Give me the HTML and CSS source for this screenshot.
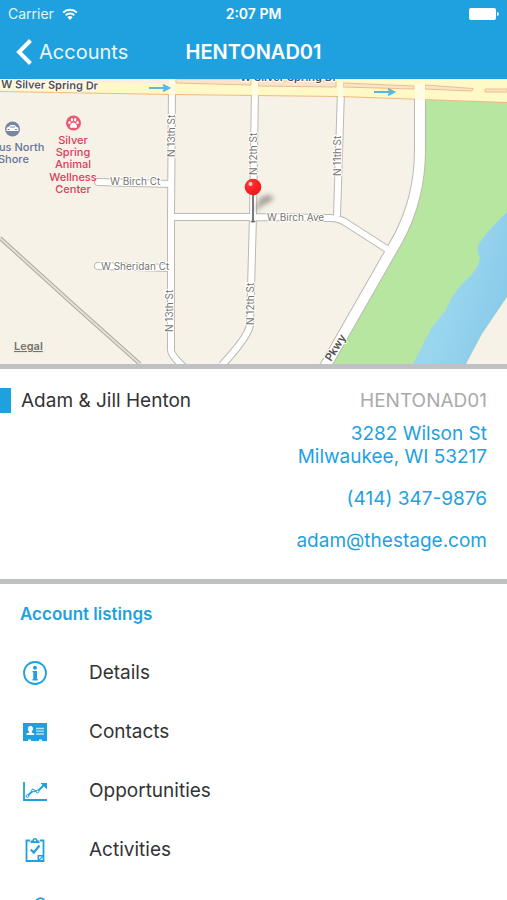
FILE: index.html
```html
<!DOCTYPE html>
<html lang="en">
<head>
<meta charset="utf-8">
<meta name="viewport" content="width=device-width, initial-scale=1">
<title>HENTONAD01</title>
<link rel="stylesheet" href="styles.css">
</head>
<body>
<div class="app">
  <header class="top">
    <div class="status">
      <span class="carrier">Carrier
        <svg class="wifi" viewBox="0 0 16 12" width="16" height="12" aria-hidden="true">
          <g fill="none" stroke="#fff" stroke-width="2">
            <path d="M1.2 4.6a9.8 9.8 0 0 1 13.6 0"/>
            <path d="M3.7 7.3a6.2 6.2 0 0 1 8.6 0"/>
          </g>
          <path d="M8 12 5.4 9.2a3.8 3.8 0 0 1 5.2 0z" fill="#fff"/>
        </svg>
      </span>
      <span class="time">2:07 PM</span>
      <svg class="battery" viewBox="0 0 30 12" width="30" height="12" aria-hidden="true">
        <rect width="27" height="12" rx="2" fill="#fff"/>
        <path d="M28 4q2 .3 2 2t-2 2z" fill="#fff"/>
      </svg>
    </div>
    <nav class="nav">
      <a class="back" href="#accounts">
        <svg viewBox="0 0 16 26" width="16" height="26" aria-hidden="true"><path d="M14.500 1.500 3 13l11.500 11.500" fill="none" stroke="#fff" stroke-width="4"/></svg>
        Accounts
      </a>
      <h1 class="title">HENTONAD01</h1>
    </nav>
  </header>

  <main class="content">
    <svg class="map" viewBox="0 79 507 285" preserveAspectRatio="xMidYMid slice" role="img" aria-label="Map">
      <defs>
        <radialGradient id="ball" cx=".35" cy=".3" r=".75"><stop offset="0" stop-color="#ff3a3c"/><stop offset=".6" stop-color="#fb1c22"/><stop offset="1" stop-color="#f0161c"/></radialGradient>
        <linearGradient id="water" x1="0" y1="0" x2="1" y2=".5"><stop offset="0" stop-color="#98d2e9"/><stop offset=".5" stop-color="#9ad6ee"/><stop offset="1" stop-color="#8bcbea"/></linearGradient>
        <filter id="soft" x="-50%" y="-50%" width="200%" height="200%"><feGaussianBlur stdDeviation="2.500"/></filter>
      </defs>
      <rect y="79" width="507" height="285" fill="#f7f2e8"/>
      <path d="M420 95H507V364H325L395 250Q421 200 421 150z" fill="#b6e6a0"/>
      <path d="M507 212Q490 228 480 242q-5 8 0 15-1 13-16 25Q452 294 446 310L432 327 413 364H466L482 334 507 297z" fill="url(#water)"/>
      <path d="M466 364 482 334 507 297V364z" fill="#f7f2e8"/>

      <path d="M0 238 75 306 140 364" fill="none" stroke="#aaa9a3" stroke-width="4"/>
      <path d="M0 238 75 306 140 364" fill="none" stroke="#e5e1d7" stroke-width="2"/>

      <g fill="none" stroke="#bdb9b1" stroke-linejoin="round">
        <path stroke-width="8" d="M172 86 171 216V350q0 6 16 20M255 88 253 216 250 325q-2 12-28 40M341 90 337 216M172 217 253 217 330 218Q340 218 348 224L390 251"/>
        <path stroke-width="8" stroke-linecap="round" d="M98 182 171 184M98 266 171 268"/>
        <path stroke-width="12" d="M420 90V150Q420 198 398 239L322 372"/>
      </g>
      <g fill="none" stroke="#fff" stroke-linejoin="round">
        <path stroke-width="6" d="M172 86 171 216V350q0 6 16 20M255 88 253 216 250 325q-2 12-28 40M341 90 337 216M172 217 253 217 330 218Q340 218 348 224L390 251"/>
        <path stroke-width="6" stroke-linecap="round" d="M98 182 171 184M98 266 171 268"/>
        <path stroke-width="10" d="M420 90V150Q420 198 398 239L322 372"/>
      </g>

      <path d="M0 79H507V103L340 97 172 95 0 92z" fill="#efb97f"/>
      <path d="M0 79H507V102L340 96 172 94 0 91z" fill="#fff9c8"/>
      <path d="M0 79H170V84L60 82 0 81z" fill="#fbeedd"/>
      <g fill="#f9e4cb" stroke="#edbd8e" stroke-width="1">
        <path d="M176 79H251V85L176 83zM258 81H336V87L258 86zM343 83 414 86V89L343 87zM425 85 473 88.500 472 91 425 89zM485 89H507V92H485z"/>
      </g>
      <g fill="#fffce4">
        <path d="M169 80h6v16h-6zM252 80h6v17h-6zM338 82h5v16h-5zM415 84h10v16h-10z"/>
      </g>
      <g fill="none" stroke="#5db4dd" stroke-width="2">
        <path d="M149 88H168M163 85l6 3-6 3M374 92H393M388 89l6 3-6 3"/>
      </g>

      <g class="street">
        <text x="110" y="185">W Birch Ct</text>
        <text x="101" y="270">W Sheridan Ct</text>
        <text x="267" y="221">W Birch Ave</text>
        <text transform="translate(175 157) rotate(-90)">N 13th St</text>
        <text transform="translate(257 175) rotate(-90)">N 12th St</text>
        <text transform="translate(341 176) rotate(-90)">N 11th St</text>
        <text transform="translate(173 332) rotate(-90)">N 13th St</text>
        <text transform="translate(254 325) rotate(-90)">N 12th St</text>
      </g>
      <g class="avenue">
        <text transform="translate(1 88) rotate(1)">W Silver Spring Dr</text>
        <text x="240" y="81">W Silver Spring Dr</text>
        <text transform="translate(331 362) rotate(-58)">Pkwy</text>
      </g>

      <circle cx="12.500" cy="129" r="7.500" fill="#7985a4"/>
      <path d="M6.500 129q0-2 2-2l2-2h4l2 2q2 0 2 2v2h-12z" fill="#fff"/>
      <path d="M10 127h5M7.500 129.500h2M15 129.500h2" stroke="#7985a4" stroke-width="1"/>
      <g class="poi poi-shop">
        <text x="-1" y="151">us North</text>
        <text x="-2" y="163">Shore</text>
      </g>
      <circle cx="73.500" cy="123" r="7.500" fill="#e95971"/>
      <g fill="#fff">
        <path d="M73.500 122.500c2 0 4 3 3.500 4.500s-2 .7-3.500.7-3 .8-3.500-.7 1.500-4.500 3.500-4.500z"/>
        <ellipse cx="69.500" cy="122.500" rx="1.200" ry="1.600"/><ellipse cx="72" cy="119.800" rx="1.200" ry="1.700"/>
        <ellipse cx="75.200" cy="119.800" rx="1.200" ry="1.700"/><ellipse cx="77.600" cy="122.500" rx="1.200" ry="1.600"/>
      </g>
      <g class="poi poi-pet">
        <text x="73" y="144">Silver</text>
        <text x="73" y="156">Spring</text>
        <text x="73" y="168">Animal</text>
        <text x="73" y="181">Wellness</text>
        <text x="73" y="193">Center</text>
      </g>

      <path d="M254 213 260 198q6-5 13-2 1 6-10 9z" fill="#55524c" opacity=".5" filter="url(#soft)"/>
      <ellipse cx="253" cy="221.500" rx="2.500" ry="1" fill="#6c6c6c"/>
      <path d="M253 194V221" stroke="#777" stroke-width="2"/>
      <circle cx="253" cy="187" r="8.300" fill="url(#ball)"/>
      <circle cx="250.500" cy="184" r="2" fill="#ffc9c9"/>

      <a href="#legal"><text class="legal" x="14" y="350">Legal</text></a>
    </svg>

    <section class="card">
      <div class="summary">
        <h2 class="name">Adam &amp; Jill Henton</h2>
        <span class="code">HENTONAD01</span>
      </div>
      <address class="contact">
        <a href="#map">3282 Wilson St<br>Milwaukee, WI 53217</a>
        <a href="tel:4143479876">(414) 347-9876</a>
        <a href="mailto:adam@thestage.com">adam@thestage.com</a>
      </address>
    </section>

    <section class="listings">
      <h2 class="heading">Account listings</h2>
      <ul class="list">
        <li><a class="row" href="#details">
          <svg class="icon" viewBox="0 0 24 24" aria-hidden="true"><circle cx="12" cy="12" r="11" fill="none" stroke="#1fa1df" stroke-width="1.800"/><circle cx="12" cy="6.800" r="2"/><path d="M9.500 10h4.500v8h.8v1.500H9.500V18h.8v-6.700h-.8z"/></svg>
          Details</a></li>
        <li><a class="row" href="#contacts">
          <svg class="icon" viewBox="0 0 24 24" aria-hidden="true"><path d="M0 3h24v18h-5v-1.500h-3V21H8v-1.500H5V21H0z"/><path d="M7.500 6c3.400 0 2.800 4.600 1.200 5.600v1.200l2.500.8V15H3.500v-1.400l2.500-.8v-1.200C4.600 10.600 4 6 7.500 6z" fill="#fff"/><path d="M13 8.500h8M13 11.200h8M13 14h8" stroke="#b9e1f5" stroke-width="1.300"/></svg>
          Contacts</a></li>
        <li><a class="row" href="#opportunities">
          <svg class="icon" viewBox="0 0 24 24" aria-hidden="true"><path d="M1 3v18h23" fill="none" stroke="#1fa1df" stroke-width="1.800"/><path d="M4.500 17 10 11.500l4.500 1L22 5" fill="none" stroke="#1fa1df" stroke-width="2"/><path d="M17.500 4H24v6.500z"/><g fill="#fff" stroke="#1fa1df"><circle cx="4.500" cy="17" r="1.400"/><circle cx="10" cy="11.500" r="1.400"/><circle cx="14.500" cy="12.500" r="1.400"/></g></svg>
          Opportunities</a></li>
        <li><a class="row" href="#activities">
          <svg class="icon" viewBox="0 0 24 24" aria-hidden="true"><path d="M7 2.500H3.500v20.500H20.500V2.500H17" fill="none" stroke="#1fa1df" stroke-width="1.800"/><path d="M7.500 5V2.500H9.500a2.500 2.500 0 0 1 5 0h2V5z"/><circle cx="12" cy="2.400" r=".9" fill="#fff"/><path d="m7.800 11.500 3 3 5.700-7" fill="none" stroke="#1fa1df" stroke-width="2.200"/><path d="M14.500 23v-6H21v1l-5 5z"/><path d="M16 18.500h3L16 21z" fill="#fff"/></svg>
          Activities</a></li>
        <li><a class="row" href="#attachments">
          <svg class="icon" viewBox="0 0 24 24" aria-hidden="true"><path d="M18 11 9 20a4 4 0 0 1-6-6L14.500 2.500a4.200 4.200 0 0 1 6 6L11 18" fill="none" stroke="#1fa1df" stroke-width="1.800"/></svg>
          Attachments</a></li>
      </ul>
    </section>
  </main>
</div>
</body>
</html>
```
FILE: styles.css
```css
* {
  box-sizing: border-box;
}

body,
h1,
h2,
ul {
  margin: 0;
  padding: 0;
}

body {
  font-family: Inter, "Liberation Sans", sans-serif;
  font-size: 19px;
  color: #333;
  background: #fff;
}

a {
  color: #1fa1df;
  text-decoration: none;
}

.app {
  display: flex;
  flex-direction: column;
  height: 100vh;
  overflow: hidden;
}

.top {
  flex: none;
  color: #fff;
  background: #1fa1df;
}

.status,
.nav {
  display: grid;
  grid-template-columns: 1fr auto 1fr;
  align-items: center;
}

.status {
  height: 27px;
  padding: 0 8px;
  font-size: 14px;
}

.carrier {
  display: flex;
  align-items: center;
  gap: 8px;
  color: #e4f4fc;
}

.time {
  font-size: 14px;
  font-weight: 600;
}

.battery {
  justify-self: end;
}

.nav {
  height: 52px;
  padding: 0 16px 2px;
}

.back {
  display: flex;
  align-items: center;
  gap: 7px;
  font-size: 20px;
  color: #e9f7fd;
}

.title {
  font-size: 20px;
  font-weight: 600;
}

.content {
  flex: 1;
  overflow-y: auto;
  scrollbar-width: none;
}

.map {
  display: block;
  width: 100%;
  height: 285px;
}

.street {
  font-size: 10px;
  fill: #77746f;
  stroke: #fff;
  stroke-width: 2px;
  paint-order: stroke;
}

.avenue {
  font-size: 11px;
  font-weight: 600;
  fill: #55524e;
  stroke: #fff;
  stroke-width: 2px;
  paint-order: stroke;
}

.poi {
  font-size: 11px;
  font-weight: 500;
}

.poi-shop {
  fill: #66749a;
}

.poi-pet {
  fill: #d9405c;
  text-anchor: middle;
}

.legal {
  font-size: 11px;
  font-weight: 600;
  fill: #77736c;
  text-decoration: underline;
}

.card {
  padding: 19px 20px 27px 0;
  border-top: 5px solid #bfc1c4;
  border-bottom: 5px solid #bfc1c4;
}

.summary {
  display: flex;
  justify-content: space-between;
  align-items: center;
  line-height: 25px;
}

.name {
  padding-left: 10px;
  border-left: 11px solid #1fa1df;
  font-size: 19px;
  font-weight: 400;
}

.code {
  color: #aaa;
}

.contact {
  display: flex;
  flex-direction: column;
  align-items: flex-end;
  gap: 19px;
  margin-top: 9px;
  font-style: normal;
  line-height: 23px;
  text-align: right;
}

.heading {
  padding: 20px 20px 8px;
  font-size: 17px;
  font-weight: 600;
  line-height: 20px;
  color: #1fa1df;
}

.list {
  padding-top: 11px;
  list-style: none;
}

.row {
  display: flex;
  align-items: center;
  gap: 42px;
  height: 59px;
  padding: 0 23px;
  color: #333;
}

.icon {
  width: 24px;
  height: 24px;
  fill: #1fa1df;
}
```
